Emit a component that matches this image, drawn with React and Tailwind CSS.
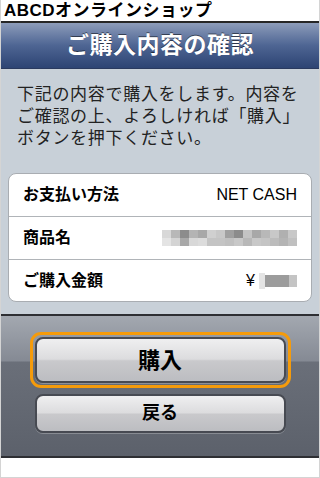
export default function App() {
  const jp = { fontFamily: '"Liberation Sans", "Noto Sans CJK JP", sans-serif' };

  return (
    <div className="w-[320px] h-[478px] bg-white border-x border-[#d4d4d4] flex flex-col" style={jp}>
      <div className="h-[23px] flex items-center px-[3px] border-b-2 border-[#262626]">
        <span className="text-[17px] font-bold text-black leading-none tracking-[0.5px]">ABCDオンラインショップ</span>
      </div>

      <div className="h-[46px] bg-gradient-to-b from-[#8d9cba] via-[#4e6593] to-[#2d4473] flex items-center justify-center border-b border-[#2a3a5e]">
        <h1 className="text-white text-[23px] font-bold leading-none tracking-[0.5px] [text-shadow:0_-1px_0_rgba(0,0,0,0.5)]">
          ご購入内容の確認
        </h1>
      </div>

      <div className="bg-[#c8d0d8] px-[7px] pt-[15px] pb-[12px]">
        <p className="px-[9px] text-[17px] leading-[22px] tracking-[0.7px] text-[#222] whitespace-nowrap">
          下記の内容で購入をします。内容を
          <br />
          ご確認の上、よろしければ「購入」
          <br />
          ボタンを押下ください。
        </p>

        <div className="mt-[23px] bg-white rounded-[8px] border border-[#a9adb2] overflow-hidden">
          <div className="h-[43px] flex items-center justify-between pl-[14px] pr-[14px] border-b border-[#b0b4b8]">
            <span className="text-[16px] font-bold text-black">お支払い方法</span>
            <span className="text-[16px] text-black">NET CASH</span>
          </div>
          <div className="h-[43px] flex items-center justify-between pl-[14px] pr-[14px] border-b border-[#b0b4b8]">
            <span className="text-[16px] font-bold text-black">商品名</span>
            <div className="flex flex-col">
              <div className="flex">
                {["#d8d8d8", "#b8b8b8", "#8c8c8c", "#b4b4b4", "#a8a8a8", "#d0d0d0", "#c8c8c8", "#a0a0a0", "#8c8c8c", "#c4c4c4", "#a8a8a8", "#b8b8b8", "#c8c8c8", "#b0b0b0", "#c8c8c8"].map((c, i) => (
                  <div key={i} className="w-[9px] h-[8px]" style={{ backgroundColor: c }} />
                ))}
              </div>
              <div className="flex">
                {["#e4e4e4", "#d4d4d4", "#a8a8a8", "#d8d8d8", "#dcdcdc", "#c4c4c4", "#c4c4c4", "#c0c0c0", "#c8c8c8", "#b8b8b8", "#c8c8c8", "#c4c4c4", "#bcbcbc", "#b4b4b4", "#c0c0c0"].map((c, i) => (
                  <div key={i} className="w-[9px] h-[8px]" style={{ backgroundColor: c }} />
                ))}
              </div>
            </div>
          </div>
          <div className="h-[41px] flex items-center justify-between pl-[14px] pr-[14px]">
            <span className="text-[16px] font-bold text-black">ご購入金額</span>
            <div className="flex items-center">
              <span className="text-[16px] text-black mr-[4px]">¥</span>
              <div className="w-[6px] h-[16px] bg-[#e4e4e4]" />
              <div className="w-[24px] h-[12px] bg-[#9c9c9c]" />
              <div className="w-[8px] h-[12px] bg-[#c4c4c4]" />
            </div>
          </div>
        </div>
      </div>

      <div className="border-t-2 border-[#2e2f33] flex flex-col">
        <div className="bg-[linear-gradient(to_bottom,#a3a8b0_0%,#858a94_32%,#6a6f79_33%,#5c616b_100%)] h-[140px] flex flex-col items-center pt-[16px] gap-[6px]">
          <div className="rounded-[11px] border-[3px] border-[#f59b0b] p-[2px]">
            <button className="w-[251px] h-[46px] rounded-[8px] border-2 border-[#474a52] bg-[linear-gradient(to_bottom,#efeff0_0%,#dcdcde_48%,#c9c9cc_52%,#bcbdc1_100%)] text-[22px] font-bold text-black shadow-[0_1px_0_rgba(255,255,255,0.25)]">
              購入
            </button>
          </div>
          <button className="w-[251px] h-[39px] rounded-[8px] border-2 border-[#474a52] bg-[linear-gradient(to_bottom,#efeff0_0%,#dcdcde_48%,#c9c9cc_52%,#bcbdc1_100%)] text-[18px] font-bold text-black shadow-[0_1px_0_rgba(255,255,255,0.25)]">
            戻る
          </button>
        </div>
        <div className="h-[2px] bg-[#2e2f33]" />
      </div>

      <div className="flex-1 bg-white border-b border-[#d4d4d4]" />
    </div>
  );
}
